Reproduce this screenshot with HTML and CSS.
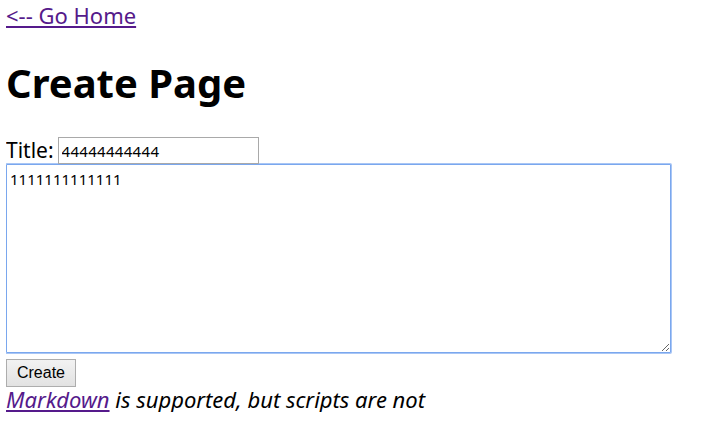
FILE: index.html
```html
<!DOCTYPE html>
<html>
<head>
<meta charset="utf-8">
<link rel="stylesheet" href="styles.css">
</head>
<body>
<a class="home" href="#">&lt;-- Go Home</a>
<h1 class="title">Create Page</h1>
<form class="form">
  <div class="row">
    <label class="label">Title:</label>
    <input class="title-input" type="text" value="44444444444">
  </div>
  <textarea class="content">1111111111111</textarea>
  <button class="create" type="button">Create</button>
</form>
<p class="note"><a href="#">Markdown</a> is supported, but scripts are not</p>
</body>
</html>
```
FILE: styles.css
```css
html, body {
  background: #fff;
}
body {
  margin: 0 6px;
  font-family: "Noto Sans", "Open Sans", sans-serif;
  font-size: 22px;
  color: #000;
}
a {
  color: #551a8b;
}
.home {
  display: inline-block;
  padding-top: 1px;
  line-height: 28px;
}
.title {
  font-size: 40px;
  font-weight: 700;
  margin: 28px 0 29px;
  line-height: 50px;
}
.form {
  margin: 0;
}
.row {
  display: flex;
  align-items: center;
  gap: 4px;
  height: 27px;
}
.label {
  font-size: 21px;
  line-height: 27px;
}
.title-input {
  box-sizing: border-box;
  width: 201px;
  height: 27px;
  margin: 0;
  border: 1px solid #a9a9a9;
  padding: 2px 3px;
  font-family: "Noto Sans", sans-serif;
  font-size: 15px;
  color: #000;
  letter-spacing: 0.3px;
}
.content {
  display: block;
  box-sizing: border-box;
  width: 665px;
  height: 189px;
  margin: 0;
  border: 1px solid #7aa7ee;
  box-shadow: 0 0 0 1px #a9c6f5;
  border-radius: 1px;
  padding: 4px 3px;
  font-family: "Noto Sans", sans-serif;
  font-size: 15px;
  color: #000;
  resize: both;
  outline: none;
}
.create {
  display: block;
  margin-top: 6px;
  box-sizing: border-box;
  width: 70px;
  height: 28px;
  border: 1px solid #adadad;
  border-radius: 0;
  background: linear-gradient(#f2f2f2, #e2e2e2);
  font-family: "Liberation Sans", Arial, sans-serif;
  font-size: 16px;
  color: #000;
  padding: 0;
}
.note {
  margin: 0;
  font-style: italic;
  line-height: 25px;
}
```
